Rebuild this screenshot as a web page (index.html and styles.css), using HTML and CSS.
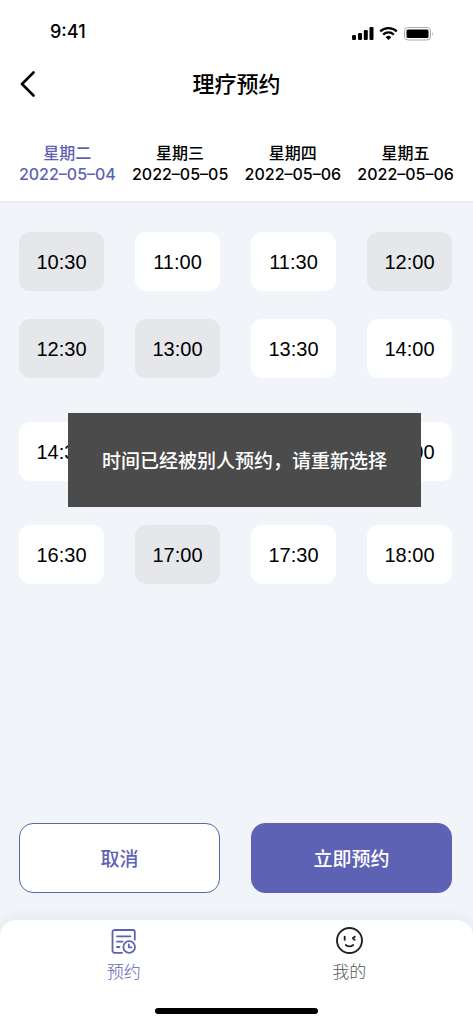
FILE: index.html
```html
<!DOCTYPE html>
<html lang="zh-CN">
<head>
<meta charset="utf-8">
<meta name="viewport" content="width=device-width, initial-scale=1">
<title>理疗预约</title>
<link rel="stylesheet" href="styles.css">
</head>
<body>
<div class="app">
  <header class="top">
    <div class="status">
      <span class="clock">9:41</span>
      <svg class="status-icons" width="82" height="16" viewBox="0 0 82 16" aria-hidden="true">
        <g fill="#000">
          <rect x="0" y="9" width="4" height="5" rx="1.2"/>
          <rect x="6" y="7" width="4" height="7" rx="1.2"/>
          <rect x="11.800" y="4" width="4" height="10" rx="1.200"/>
          <rect x="17.500" y="1" width="4" height="13" rx="1.200"/>
          <path d="M36.500 14 L33.700 11.200 A4 4 0 0 1 39.300 11.200 Z"/>
        </g>
        <g fill="none" stroke="#000" stroke-width="2.300">
          <path d="M28.200 5.400 A12 12 0 0 1 44.800 5.400"/>
          <path d="M31.200 8.600 A7.600 7.600 0 0 1 41.800 8.600"/>
        </g>
        <rect x="52.500" y="1.500" width="26" height="12.500" rx="3.500" fill="none" stroke="#a9a9b8"/>
        <rect x="54.500" y="3.500" width="22" height="8.500" rx="1.500" fill="#000"/>
        <path d="M80 5.700 Q81.800 7.700 80 9.700 Z" fill="#a9a9b8"/>
      </svg>
    </div>
    <div class="nav">
      <button class="back" type="button" aria-label="返回">
        <svg width="16" height="26" viewBox="0 0 16 26" fill="none" stroke="#000" stroke-width="2.600" stroke-linecap="round" stroke-linejoin="round" aria-hidden="true"><path d="M13.500 1.500 L2 13 L13.500 24.500"/></svg>
      </button>
      <h1 class="title">理疗预约</h1>
    </div>
    <div class="days">
      <button class="day day-active" type="button"><span>星期二</span><span>2022–05–04</span></button>
      <button class="day" type="button"><span>星期三</span><span>2022–05–05</span></button>
      <button class="day" type="button"><span>星期四</span><span>2022–05–06</span></button>
      <button class="day" type="button"><span>星期五</span><span>2022–05–06</span></button>
    </div>
  </header>

  <main class="main">
    <div class="slots">
      <div class="slot-group">
        <button class="slot" type="button" disabled>10:30</button>
        <button class="slot" type="button">11:00</button>
        <button class="slot" type="button">11:30</button>
        <button class="slot" type="button" disabled>12:00</button>
        <button class="slot" type="button" disabled>12:30</button>
        <button class="slot" type="button" disabled>13:00</button>
        <button class="slot" type="button">13:30</button>
        <button class="slot" type="button">14:00</button>
      </div>
      <div class="slot-group">
        <button class="slot" type="button">14:30</button>
        <button class="slot" type="button">15:00</button>
        <button class="slot" type="button">15:30</button>
        <button class="slot" type="button">16:00</button>
      </div>
      <div class="slot-group">
        <button class="slot" type="button">16:30</button>
        <button class="slot" type="button" disabled>17:00</button>
        <button class="slot" type="button">17:30</button>
        <button class="slot" type="button">18:00</button>
      </div>
    </div>
    <div class="actions">
      <button class="action" type="button">取消</button>
      <button class="action action-primary" type="button">立即预约</button>
    </div>
    <div class="toast" role="alert">时间已经被别人预约，请重新选择</div>
  </main>

  <footer class="bottom">
    <nav class="tabs">
      <a class="tab tab-active" href="#booking">
        <svg width="28" height="28" viewBox="0 0 28 28" fill="none" stroke="currentColor" stroke-width="1.800" stroke-linecap="round" stroke-linejoin="round" aria-hidden="true">
          <path d="M12 25.800 H4.500 a2 2 0 0 1 -2 -2 V5 a2 2 0 0 1 2 -2 H22.800 a2 2 0 0 1 2 2 V12.500"/>
          <path d="M7 9.300 H20.500 M7 14.700 H12.500 M7 20 H9.500"/>
          <circle cx="19.200" cy="20" r="5.800"/>
          <path d="M18.800 17.300 V20.300 H21.500"/>
        </svg>
        <span>预约</span>
      </a>
      <a class="tab" href="#mine">
        <svg width="28" height="28" viewBox="0 0 28 28" fill="none" stroke="#222" stroke-width="1.900" stroke-linecap="round" stroke-linejoin="round" aria-hidden="true">
          <circle cx="14.500" cy="13.500" r="12.500"/>
          <path d="M9.700 9.700 V12.700 M19.700 9.700 L17.800 11.200 L19.700 12.700"/>
          <path d="M10.800 18 Q14.500 20.800 18.200 18"/>
        </svg>
        <span>我的</span>
      </a>
    </nav>
    <div class="home-bar"></div>
  </footer>
</div>
</body>
</html>
```
FILE: styles.css
```css
* { box-sizing: border-box; }

body {
  margin: 0;
  background: #f1f4f9;
  color: #000;
  font-family: Inter, "Noto Sans CJK SC", sans-serif;
}

button {
  margin: 0;
  padding: 0;
  border: 0;
  background: none;
  color: inherit;
  font: inherit;
  cursor: pointer;
}

.app {
  display: flex;
  flex-direction: column;
  min-height: 100vh;
}

.top {
  background: #fff;
  border-bottom: 2px solid #e8eaee;
}

.status {
  display: flex;
  align-items: center;
  justify-content: space-between;
  padding: 20px 39px 0 50px;
}

.clock {
  font-size: 18px;
  line-height: 24px;
  font-weight: 500;
}

.status-icons { margin-top: 4px; }

.nav {
  display: grid;
  grid-template-columns: 40px 1fr 40px;
  align-items: center;
  padding: 24px 20px 0;
}

.back {
  display: flex;
}

.title {
  margin: 0;
  font-size: 22px;
  line-height: 32px;
  font-weight: 500;
  text-align: center;
}

.days {
  display: grid;
  grid-template-columns: repeat(4, 1fr);
  padding: 43px 11px 16px;
}

.day {
  display: flex;
  flex-direction: column;
  align-items: center;
  font-size: 16px;
  line-height: 21px;
  font-weight: 500;
  white-space: nowrap;
}

.day-active { color: #5e62b5; }

.main {
  position: relative;
  display: flex;
  flex: 1;
  flex-direction: column;
  justify-content: space-between;
  gap: 32px;
  padding: 29px 21px 27px 19px;
}

.slots {
  display: flex;
  flex-direction: column;
  gap: 44px;
}

.slot-group {
  display: grid;
  grid-template-columns: repeat(4, 1fr);
  gap: 28px 31px;
}

.slot {
  height: 59px;
  padding-top: 2px;
  border-radius: 11px;
  background: #fff;
  font-family: "Liberation Sans", sans-serif;
  font-size: 20px;
}

.slot:disabled {
  background: #e6e7eb;
  color: #000;
  cursor: default;
}

.actions {
  display: grid;
  grid-template-columns: 1fr 1fr;
  gap: 31px;
}

.action {
  height: 70px;
  padding-bottom: 2px;
  border: 1px solid #5e62b5;
  border-radius: 14px;
  background: #fff;
  color: #5e62b5;
  font-size: 19px;
  font-weight: 500;
}

.action-primary {
  background: #5e62b5;
  color: #fff;
}

.toast {
  position: absolute;
  top: 210px;
  left: 68px;
  right: 52px;
  padding: 35px 16px 31px;
  background: #4b4b4b;
  color: #fff;
  font-size: 19px;
  line-height: 28px;
  font-weight: 500;
  text-align: center;
}

.bottom {
  border-radius: 16px 16px 0 0;
  background: #fff;
  box-shadow: 0 -2px 14px rgba(0, 0, 0, 0.06);
  padding-bottom: 10px;
}

.tabs {
  display: grid;
  grid-template-columns: 1fr 1fr;
  padding: 7px 11px 0;
}

.tab {
  display: flex;
  flex-direction: column;
  align-items: center;
  gap: 5px;
  color: #55575c;
  font-size: 17px;
  line-height: 24px;
  font-weight: 300;
  text-decoration: none;
}

.tab-active { color: #5e62b5; }

.home-bar {
  width: 163px;
  height: 6px;
  margin: 24px auto 0;
  border-radius: 3px;
  background: #000;
}
```
